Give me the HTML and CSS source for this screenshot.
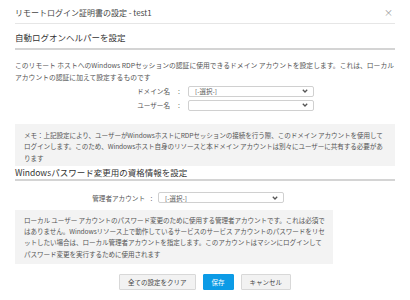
FILE: index.html
```html
<!DOCTYPE html>
<html lang="ja">
<head>
  <meta charset="UTF-8" />
  <title>リモートログイン証明書の設定</title>
  <link rel="stylesheet" href="styles.css">
</head>
<body>

  <div class="dialog-title">
    <span>リモートログイン証明書の設定 - test1</span>
    <span class="close">×</span>
  </div>

  <div class="section-head">自動ログオンヘルパーを設定</div>

  <p class="desc">このリモート ホストへのWindows RDPセッションの認証に使用できるドメイン アカウントを設定します。これは、ローカル アカウントの認証に加えて設定するものです</p>

  <div class="form-row domain">
    <span class="label">ドメイン名</span>
    <span class="colon">:</span>
    <div class="select">
      <span>[-選択-]</span>
      <svg class="chev" width="6" height="4" viewBox="0 0 6 4"><path d="M0.8 0.8 L3 3 L5.2 0.8" fill="none" stroke="#555" stroke-width="1.3"/></svg>
    </div>
  </div>
  <div class="form-row domain">
    <span class="label">ユーザー名</span>
    <span class="colon">:</span>
    <div class="select">
      <span></span>
      <svg class="chev" width="6" height="4" viewBox="0 0 6 4"><path d="M0.8 0.8 L3 3 L5.2 0.8" fill="none" stroke="#555" stroke-width="1.3"/></svg>
    </div>
  </div>

  <div class="note wide">メモ：上記設定により、ユーザーがWindowsホストにRDPセッションの接続を行う際、このドメイン アカウントを使用してログインします。このため、Windowsホスト自身のリソースと本ドメイン アカウントは別々にユーザーに共有する必要があります</div>

  <div class="section-head second">Windowsパスワード変更用の資格情報を設定</div>

  <div class="form-row admin">
    <span class="label">管理者アカウント</span>
    <span class="colon">:</span>
    <div class="select">
      <span>[-選択-]</span>
      <svg class="chev" width="6" height="4" viewBox="0 0 6 4"><path d="M0.8 0.8 L3 3 L5.2 0.8" fill="none" stroke="#555" stroke-width="1.3"/></svg>
    </div>
  </div>

  <div class="note narrow">ローカル ユーザー アカウントのパスワード変更のために使用する管理者アカウントです。これは必須ではありません。Windowsリソース上で動作しているサービスのサービス アカウントのパスワードをリセットしたい場合は、ローカル管理者アカウントを指定します。このアカウントはマシンにログインしてパスワード変更を実行するために使用されます</div>

  <div class="actions">
    <button class="btn">全ての設定をクリア</button>
    <button class="btn primary">保存</button>
    <button class="btn">キャンセル</button>
  </div>

</body>
</html>
```

FILE: styles.css
```css
:root {
  --text: #444;
  --muted: #555;
  --line: #e6e6e6;
  --box: #f3f3f3;
  --blue: #0c9be6;
}

body {
  margin: 0;
  padding: 0 15px;
  font-family: "Noto Sans CJK JP", "Noto Sans", sans-serif;
  color: var(--text);
  background: #fff;
}

.dialog-title {
  display: flex;
  justify-content: space-between;
  align-items: center;
  height: 22px;
  padding-top: 1px;
  font-size: 8px;
  border-bottom: 1px solid var(--line);
}

.close {
  font-size: 9px;
  color: #999;
  margin-right: 2px;
}

.section-head {
  font-size: 8.5px;
  line-height: 12px;
  padding: 7px 0 5px;
  border-bottom: 2px solid #d4d4d4;
  color: #333;
}

.section-head.second {
  padding: 0 0 1px;
}

.desc {
  margin: 10px 0 1px;
  font-size: 6.8px;
  line-height: 11.5px;
  color: var(--muted);
}

.form-row {
  display: flex;
  align-items: center;
  height: 14px;
  font-size: 6.6px;
  color: var(--muted);
}

.form-row .label {
  text-align: right;
}

.domain .label { width: 155px; }
.domain .colon { width: 18px; text-align: center; }
.admin .label { width: 130px; }
.admin .colon { width: 13px; text-align: center; }

.admin {
  margin-top: 10px;
}

.select {
  width: 118px;
  height: 9px;
  border: 1px solid #d0d0d0;
  border-radius: 2px;
  display: flex;
  justify-content: space-between;
  align-items: center;
  padding: 0 0 0 6px;
  font-size: 6.5px;
  color: #555;
}

.chev {
  margin-right: 5px;
}

.note {
  background: var(--box);
  font-size: 6.6px;
  line-height: 11.3px;
  letter-spacing: -0.1px;
  color: var(--muted);
}

.note.wide {
  margin-top: 12px;
  padding: 6px 10px 2px 9px;
}

.note.narrow {
  width: 301px;
  margin-top: 5px;
  padding: 5px 8px 4px 9px;
}

.actions {
  display: flex;
  justify-content: center;
  gap: 7px;
  margin-top: 10px;
}

.btn {
  font-family: inherit;
  font-size: 6.5px;
  height: 16px;
  padding: 0 8px;
  background: #f2f2f2;
  border: 1px solid #d8d8d8;
  border-radius: 1px;
  color: #444;
}

.btn.primary {
  background: var(--blue);
  border-color: var(--blue);
  color: #fff;
}
```
